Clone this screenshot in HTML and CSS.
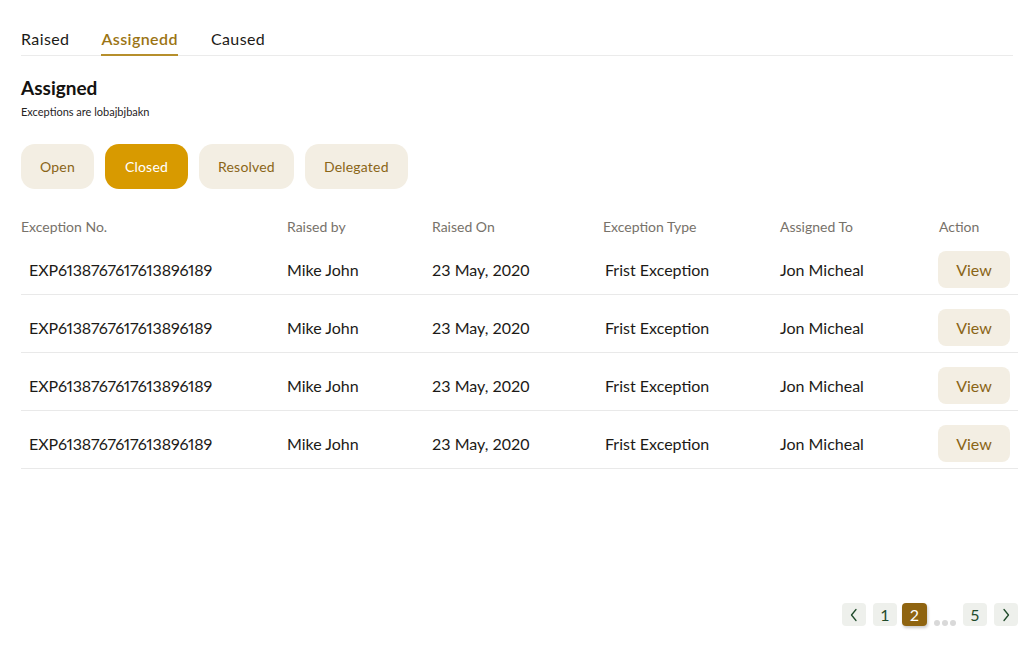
FILE: index.html
```html
<!DOCTYPE html>
<html>
<head>
<meta charset="utf-8">
<link rel="stylesheet" href="styles.css">
</head>
<body>
<div class="page">
  <nav class="tabs">
    <a class="tab">Raised</a>
    <a class="tab active">Assignedd</a>
    <a class="tab">Caused</a>
  </nav>

  <h1 class="title">Assigned</h1>
  <p class="subtitle">Exceptions are lobajbjbakn</p>

  <div class="filters">
    <button class="chip">Open</button>
    <button class="chip selected">Closed</button>
    <button class="chip">Resolved</button>
    <button class="chip">Delegated</button>
  </div>

  <div class="table">
    <div class="thead">
      <div>Exception No.</div>
      <div>Raised by</div>
      <div>Raised On</div>
      <div>Exception Type</div>
      <div>Assigned To</div>
      <div>Action</div>
    </div>
    <div class="row">
      <div class="first">EXP6138767617613896189</div>
      <div>Mike John</div>
      <div>23 May, 2020</div>
      <div class="type">Frist Exception</div>
      <div>Jon Micheal</div>
      <div><button class="view">View</button></div>
    </div>
    <div class="row">
      <div class="first">EXP6138767617613896189</div>
      <div>Mike John</div>
      <div>23 May, 2020</div>
      <div class="type">Frist Exception</div>
      <div>Jon Micheal</div>
      <div><button class="view">View</button></div>
    </div>
    <div class="row">
      <div class="first">EXP6138767617613896189</div>
      <div>Mike John</div>
      <div>23 May, 2020</div>
      <div class="type">Frist Exception</div>
      <div>Jon Micheal</div>
      <div><button class="view">View</button></div>
    </div>
    <div class="row">
      <div class="first">EXP6138767617613896189</div>
      <div>Mike John</div>
      <div>23 May, 2020</div>
      <div class="type">Frist Exception</div>
      <div>Jon Micheal</div>
      <div><button class="view">View</button></div>
    </div>
  </div>

  <div class="pager">
    <button class="pg arrow" aria-label="Previous">
      <svg width="10" height="14" viewBox="0 0 10 14"><path d="M7 1.5 L2.5 7 L7 12.5" fill="none" stroke="#1f4a2a" stroke-width="1.3" stroke-linecap="round" stroke-linejoin="round"/></svg>
    </button>
    <button class="pg">1</button>
    <button class="pg current">2</button>
    <span class="dots"><i></i><i></i><i></i></span>
    <button class="pg">5</button>
    <button class="pg arrow" aria-label="Next">
      <svg width="10" height="14" viewBox="0 0 10 14"><path d="M3 1.5 L7.5 7 L3 12.5" fill="none" stroke="#1f4a2a" stroke-width="1.3" stroke-linecap="round" stroke-linejoin="round"/></svg>
    </button>
  </div>
</div>
</body>
</html>
```

FILE: styles.css
```css
* { box-sizing: border-box; }
html, body { margin: 0; padding: 0; background: #fff; }
body {
  font-family: "Lato", "Liberation Sans", sans-serif;
  color: #1c1a17;
}
.page {
  width: 1034px;
  height: 649px;
  padding: 27px 16px 0 21px;
  display: flex;
  flex-direction: column;
}
.tabs {
  display: flex;
  gap: 33px;
  border-bottom: 1px solid #ebebeb;
  margin-right: 5px;
}
.tab {
  font-size: 16px;
  line-height: 24px;
  padding-bottom: 3px;
  letter-spacing: 0.4px;
  color: #1c1a17;
  border-bottom: 2px solid transparent;
  margin-bottom: -1px;
}
.tab:first-child { margin-right: -1px; }
.tab.active {
  color: #9b7414;
  font-weight: 600;
  border-bottom-color: #b68f2c;
}
.title {
  margin: 21px 0 0;
  font-size: 19px;
  line-height: 22px;
  font-weight: 700;
  color: #14120f;
}
.subtitle {
  margin: 6px 0 0;
  font-size: 11px;
  line-height: 14px;
  color: #26231e;
}
.filters {
  display: flex;
  gap: 11px;
  margin-top: 25px;
}
.chip {
  height: 45px;
  border: none;
  border-radius: 14px;
  background: #f3eee3;
  color: #8a6517;
  font-family: inherit;
  font-size: 14px;
  letter-spacing: 0.2px;
  padding: 0 19px;
}
.chip.selected {
  background: #d89a00;
  color: #fff;
  padding: 0 20px;
}
.table {
  margin-top: 26px;
  width: 997px;
}
.thead, .row {
  display: grid;
  grid-template-columns: 266px 145px 171px 177px 159px 79px;
  align-items: center;
}
.thead {
  height: 22px;
  font-size: 14px;
  color: #77726a;
}
.row {
  height: 58px;
  padding: 14px 0 6px;
  border-bottom: 1px solid #e9e9e9;
  font-size: 16px;
  color: #1c1a17;
}
.row .first {
  padding-left: 8px;
  font-variant-numeric: proportional-nums;
  letter-spacing: -0.1px;
}
.row .type { padding-left: 2px; }
.view {
  width: 72px;
  height: 37px;
  margin-left: -1px;
  border: none;
  border-radius: 8px;
  background: #f3eee3;
  color: #8a6517;
  font-family: inherit;
  font-size: 16px;
}
.pager {
  margin-top: auto;
  margin-bottom: 23px;
  align-self: flex-end;
  display: flex;
  align-items: center;
  gap: 7px;
}
.pg {
  width: 24px;
  height: 23px;
  border: none;
  border-radius: 4px;
  background: #eef0ec;
  color: #1f4a2a;
  font-family: inherit;
  font-size: 16px;
  padding: 0;
  display: flex;
  align-items: center;
  justify-content: center;
}
.pg.current {
  width: 25px;
  background: #8f6410;
  color: #fff;
  box-shadow: 1px 2px 3px rgba(0,0,0,0.2);
  margin-left: -2px;
}
.dots {
  display: flex;
  gap: 2px;
  align-self: flex-end;
}
.dots i {
  width: 6px;
  height: 6px;
  border-radius: 50%;
  background: #d9d9d9;
}
```
